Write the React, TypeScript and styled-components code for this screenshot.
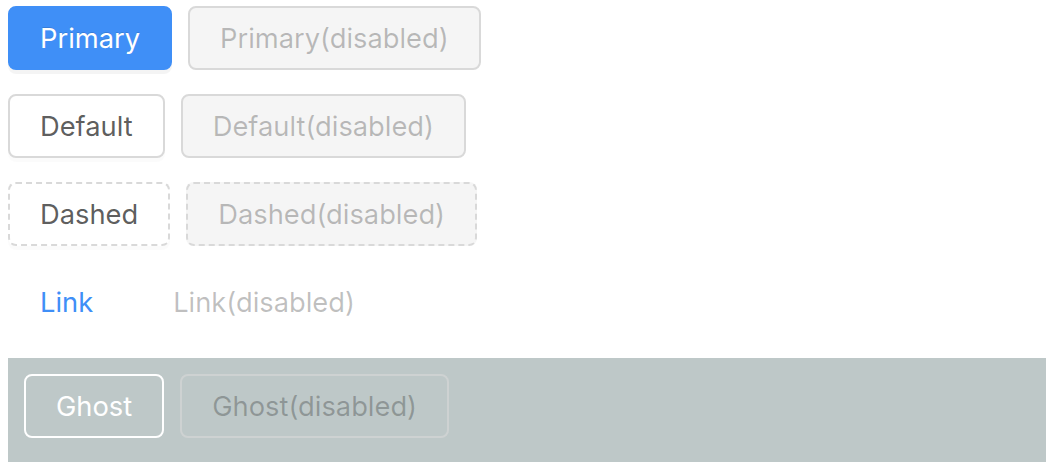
import { FC, ReactNode } from 'react';
import styled, { createGlobalStyle, css } from 'styled-components';

const GlobalStyle = createGlobalStyle`
    body {
        margin: 0;
        background: #fff;
        font-family: Inter, "Noto Sans", sans-serif;
    }
`;

const Page = styled.div`
    padding: 6px 8px 0 8px;
    display: flex;
    flex-direction: column;
    gap: 24px;
`;

const Row = styled.div`
    display: flex;
    flex-direction: row;
    align-items: center;
    gap: 16px;
`;

const GhostArea = styled(Row)`
    background: rgb(190, 200, 200);
    padding: 16px 16px 24px 16px;
`;

type Kind = 'primary' | 'default' | 'dashed' | 'link' | 'ghost';

const Btn = styled.button<{ $kind: Kind }>`
    height: 64px;
    padding: 0 30px;
    border-radius: 8px;
    border: 2px solid #d9d9d9;
    font-family: Inter, "Noto Sans", sans-serif;
    font-size: 27.3px;
    font-weight: 400;
    white-space: nowrap;
    background: #fff;
    color: rgba(0, 0, 0, 0.65);
    box-shadow: 0 4px 0 rgba(0, 0, 0, 0.015);
    cursor: pointer;

    ${({ $kind }) => $kind === 'primary' && css`
        background: #3f8ff7;
        border-color: #3f8ff7;
        color: #fff;
        text-shadow: 0 -1px 0 rgba(0, 0, 0, 0.12);
        box-shadow: 0 4px 0 rgba(0, 0, 0, 0.045);
    `}
    ${({ $kind }) => $kind === 'dashed' && css`
        border-style: dashed;
    `}
    ${({ $kind }) => $kind === 'link' && css`
        background: transparent;
        border-color: transparent;
        color: #3f8ff7;
        box-shadow: none;
    `}
    ${({ $kind }) => $kind === 'ghost' && css`
        background: transparent;
        border-color: #fff;
        color: #fff;
        box-shadow: none;
    `}

    &:disabled {
        cursor: not-allowed;
        color: rgba(0, 0, 0, 0.25);
        background: #f5f5f5;
        border-color: #d9d9d9;
        text-shadow: none;
        box-shadow: none;
    }
    ${({ $kind }) => $kind === 'link' && css`
        &:disabled {
            background: transparent;
            border-color: transparent;
        }
    `}
    ${({ $kind }) => $kind === 'ghost' && css`
        &:disabled {
            background: transparent;
            border-color: rgba(217, 217, 217, 0.6);
        }
    `}
`;

const Pair: FC<{ kind: Kind; label: string }> = ({ kind, label }) => (
    <>
        <Btn $kind={kind}>{label}</Btn>
        <Btn $kind={kind} disabled>{label}(disabled)</Btn>
    </>
);

const Line: FC<{ children: ReactNode }> = ({ children }) => <Row>{children}</Row>;

const App: FC = () => (
    <Page>
        <GlobalStyle />
        <Line><Pair kind="primary" label="Primary" /></Line>
        <Line><Pair kind="default" label="Default" /></Line>
        <Line><Pair kind="dashed" label="Dashed" /></Line>
        <Line><Pair kind="link" label="Link" /></Line>
        <GhostArea><Pair kind="ghost" label="Ghost" /></GhostArea>
    </Page>
);

export default App;
